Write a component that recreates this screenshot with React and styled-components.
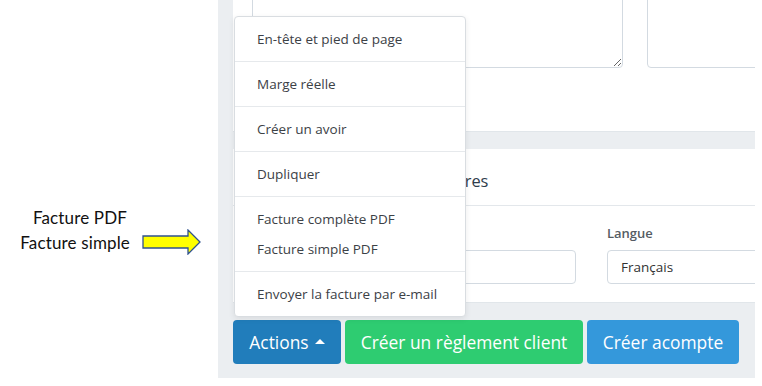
import React from "react";
import styled, { createGlobalStyle } from "styled-components";

const Global = createGlobalStyle`
  html, body { margin: 0; padding: 0; background: #ffffff; }
  body { font-family: "Open Sans", "Noto Sans", sans-serif; }
  * { box-sizing: border-box; }
`;

const Page = styled.div`
  display: flex;
  width: 762px;
  height: 386px;
  overflow: hidden;
  background: #ffffff;
`;

const Side = styled.div`
  width: 218px;
  flex: none;
  padding-top: 205px;
  display: flex;
  justify-content: flex-end;
  align-items: flex-start;
  padding-right: 16px;
`;

const Note = styled.div`
  display: flex;
  align-items: flex-end;
  gap: 12px;
`;

const NoteText = styled.div`
  font-family: "Lato", "Open Sans", sans-serif;
  font-size: 17px;
  line-height: 25px;
  color: #111;
  text-align: right;
  letter-spacing: 0.15px;
`;

const NoteLine = styled.div`
  padding-right: ${(p) => p.$pr || 0}px;
`;

const Arrow = styled.svg`
  display: block;
  margin-bottom: 0px;
`;

const Workspace = styled.div`
  width: 537px;
  height: 378px;
  flex: none;
  background: #ebeef1;
  overflow: hidden;
  padding-left: 15px;
  display: flex;
  flex-direction: column;
`;

const Card = styled.div`
  background: #ffffff;
  width: 560px;
  flex: none;
  border-bottom: 1px solid #e1e6ea;
`;

const TopCard = styled(Card)`
  margin-top: -40px;
  height: 172px;
  padding: 0 19px;
  display: flex;
  gap: 24px;
`;

const Area = styled.textarea`
  width: ${(p) => p.$w}px;
  height: 108px;
  flex: none;
  border: 1px solid #d3dae1;
  border-radius: 4px;
  background: #fff;
  resize: vertical;
  font: inherit;
  outline: none;
`;

const Gap = styled.div`
  height: ${(p) => p.$h}px;
  flex: none;
`;

const InfoCard = styled(Card)`
  height: 154px;
`;

const CardHeader = styled.div`
  height: 57px;
  border-bottom: 1px solid #e3e7eb;
  padding: 6px 19px 0;
  display: flex;
  align-items: center;
`;

const CardTitle = styled.h3`
  margin: 0;
  font-size: 16.4px;
  font-weight: 400;
  color: #2f3d4c;
`;

const CardBody = styled.div`
  display: grid;
  grid-template-columns: 324px 324px;
  column-gap: 31px;
  padding: 17px 19px 0;
`;

const Field = styled.div`
  display: flex;
  flex-direction: column;
`;

const Label = styled.label`
  font-size: 13px;
  font-weight: 600;
  color: #555c63;
  height: 27px;
  line-height: 20px;
`;

const Input = styled.div`
  height: 34px;
  border: 1px solid #d3dae1;
  border-radius: 4px;
  background: #fff;
  font-size: 13.5px;
  color: #333;
  padding: 0 13px;
  display: flex;
  align-items: center;
`;

const Toolbar = styled.div`
  display: flex;
  gap: 4px;
  height: 44px;
  flex: none;
`;

const Btn = styled.button`
  width: ${(p) => p.$w}px;
  height: 44px;
  border: none;
  border-radius: 4px;
  padding: 0;
  font-family: "Open Sans", "Noto Sans", sans-serif;
  font-size: 17.4px;
  color: #ffffff;
  background: ${(p) => p.$bg};
  display: flex;
  align-items: center;
  justify-content: center;
  gap: 6px;
  cursor: pointer;
`;

const DropWrap = styled.div`
  position: relative;
  display: flex;
`;

const Menu = styled.div`
  position: absolute;
  left: 1px;
  bottom: calc(100% + 3px);
  width: 232px;
  background: #fff;
  border: 1px solid #d9dde1;
  border-radius: 4px;
  box-shadow: 0 2px 6px rgba(0, 0, 0, 0.08);
  z-index: 5;
`;

const Group = styled.div`
  padding: 7px 0;
  & + & {
    border-top: 1px solid #e6e9ec;
  }
`;

const Item = styled.div`
  height: 30px;
  line-height: 30px;
  padding: 0 22px;
  font-size: 13.5px;
  color: #3c4146;
  white-space: nowrap;
`;

const Caret = styled.span`
  width: 0;
  height: 0;
  border-left: 5px solid transparent;
  border-right: 5px solid transparent;
  border-bottom: 5px solid #fff;
  margin-top: -1px;
`;

const groups = [
  ["En-tête et pied de page"],
  ["Marge réelle"],
  ["Créer un avoir"],
  ["Dupliquer"],
  ["Facture complète PDF", "Facture simple PDF"],
  ["Envoyer la facture par e-mail"],
];

export default function App() {
  return (
    <>
      <Global />
      <Page>
        <Side>
          <Note>
            <NoteText>
              <NoteLine $pr={3}>Facture PDF</NoteLine>
              <NoteLine>Facture simple</NoteLine>
            </NoteText>
            <Arrow width="60" height="26" viewBox="0 0 60 26">
              <path
                d="M1 7 H46 V1 L58 13 L46 25 V19 H1 Z"
                fill="#ffff00"
                stroke="#2f528f"
                strokeWidth="1.3"
                strokeLinejoin="miter"
              />
            </Arrow>
          </Note>
        </Side>
        <Workspace>
          <TopCard>
            <Area $w={371} />
            <Area $w={200} />
          </TopCard>
          <Gap $h={17} />
          <InfoCard>
            <CardHeader>
              <CardTitle>Informations complémentaires</CardTitle>
            </CardHeader>
            <CardBody>
              <Field>
                <Label />
                <Input />
              </Field>
              <Field>
                <Label>Langue</Label>
                <Input>Français</Input>
              </Field>
            </CardBody>
          </InfoCard>
          <Gap $h={17} />
          <Toolbar>
            <DropWrap>
              <Menu>
                {groups.map((g, i) => (
                  <Group key={i}>
                    {g.map((t) => (
                      <Item key={t}>{t}</Item>
                    ))}
                  </Group>
                ))}
              </Menu>
              <Btn $bg="#217dbb" $w={108}>
                Actions <Caret />
              </Btn>
            </DropWrap>
            <Btn $bg="#2ecc71" $w={238}>Créer un règlement client</Btn>
            <Btn $bg="#3498db" $w={152}>Créer acompte</Btn>
          </Toolbar>
        </Workspace>
      </Page>
    </>
  );
}
